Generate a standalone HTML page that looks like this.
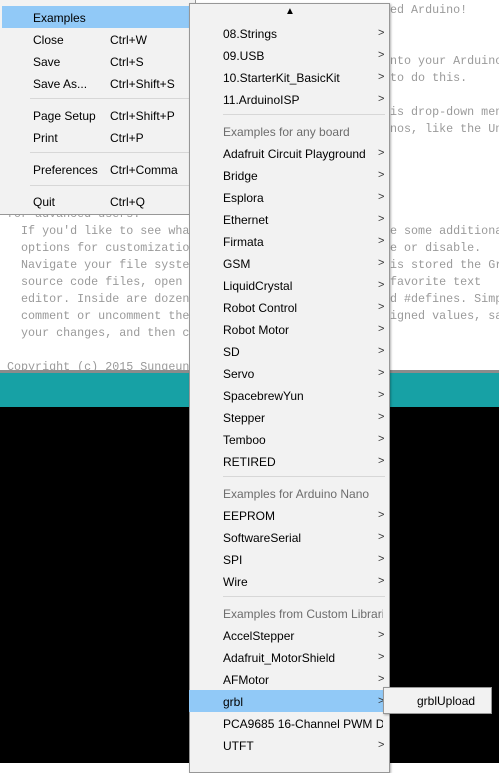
<!DOCTYPE html>
<html><head><style>
*{margin:0;padding:0;box-sizing:border-box}
body{width:499px;height:763px;overflow:hidden;position:relative;background:#fff;font-family:"Liberation Sans",sans-serif}
.mono{position:absolute;font-family:"Liberation Mono",monospace;font-size:11.7px;color:#9a9a9a;white-space:pre;line-height:17px}
.teal{position:absolute;left:0;top:373px;width:499px;height:34px;background:#17a1a5}
.gline{position:absolute;left:0;top:370px;width:499px;height:3px;background:#8c8c8c}
.black{position:absolute;left:0;top:407px;width:499px;height:356px;background:#000}
.menu{position:absolute;background:#f2f2f2;border:1px solid #979797;font-size:12px;color:#000}
.it{position:absolute;height:22px;line-height:22px;white-space:nowrap}
.sep{position:absolute;height:1px;background:#d7d7d7}
.hd{color:#6d6d6d}
.ar{position:absolute;font-size:11px;color:#333}
.hl{position:absolute;background:#91c9f7}
</style></head><body>
<div class="mono" style="left:390px;top:2px">ed Arduino!</div>
<div class="mono" style="left:390px;top:53px">nto your Arduino
to do this.</div>
<div class="mono" style="left:390px;top:104px">is drop-down menu
nos, like the Uno</div>
<div class="mono" style="left:390px;top:223px">e some additional
e or disable.
is stored the Grbl
favorite text
d #defines. Simpl
igned values, sav</div>
<div class="mono" style="left:7px;top:206px">for advanced users.
  If you'd like to see wha
  options for customizatio
  Navigate your file syste
  source code files, open
  editor. Inside are dozen
  comment or uncomment the
  your changes, and then c

Copyright (c) 2015 Sungeun</div>
<div class="gline"></div>
<div class="teal"></div>
<div class="black"></div>

<div class="menu" style="left:-1px;top:-1px;width:197px;height:216px">
 <div class="hl" style="left:2px;top:6px;width:194px;height:22px"></div>
 <div class="it" style="left:33px;top:7px">Examples</div>
 <div class="it" style="left:33px;top:29px">Close</div><div class="it" style="left:110px;top:29px">Ctrl+W</div>
 <div class="it" style="left:33px;top:51px">Save</div><div class="it" style="left:110px;top:51px">Ctrl+S</div>
 <div class="it" style="left:33px;top:73px">Save As...</div><div class="it" style="left:110px;top:73px">Ctrl+Shift+S</div>
 <div class="sep" style="left:30px;top:98px;width:160px"></div>
 <div class="it" style="left:33px;top:105px">Page Setup</div><div class="it" style="left:110px;top:105px">Ctrl+Shift+P</div>
 <div class="it" style="left:33px;top:127px">Print</div><div class="it" style="left:110px;top:127px">Ctrl+P</div>
 <div class="sep" style="left:30px;top:152px;width:160px"></div>
 <div class="it" style="left:33px;top:159px">Preferences</div><div class="it" style="left:110px;top:159px">Ctrl+Comma</div>
 <div class="sep" style="left:30px;top:185px;width:160px"></div>
 <div class="it" style="left:33px;top:191px">Quit</div><div class="it" style="left:110px;top:191px">Ctrl+Q</div>
</div>

<div class="menu" style="left:189px;top:3px;width:201px;height:770px;box-shadow:1px 1px 2px rgba(0,0,0,.3)">
 <div style="position:absolute;left:95px;top:2px;font-size:10px">▲</div>
 <div class="hl" style="left:-1px;top:686px;width:201px;height:22px"></div>
 <div id="items"></div>
</div>

<div class="menu" style="left:383px;top:687px;width:109px;height:27px;box-shadow:1px 1px 2px rgba(0,0,0,.3)">
 <div class="it" style="left:33px;top:2px">grblUpload</div>
</div>

<script>
var rows=[["08.Strings",1],["09.USB",1],["10.StarterKit_BasicKit",1],["11.ArduinoISP",1],["-"],["Examples for any board",0,1],["Adafruit Circuit Playground",1],["Bridge",1],["Esplora",1],["Ethernet",1],["Firmata",1],["GSM",1],["LiquidCrystal",1],["Robot Control",1],["Robot Motor",1],["SD",1],["Servo",1],["SpacebrewYun",1],["Stepper",1],["Temboo",1],["RETIRED",1],["-"],["Examples for Arduino Nano",0,1],["EEPROM",1],["SoftwareSerial",1],["SPI",1],["Wire",1],["-"],["Examples from Custom Libraries",0,1],["AccelStepper",1],["Adafruit_MotorShield",1],["AFMotor",1],["grbl",1],["PCA9685 16-Channel PWM Driver",0],["UTFT",1]];
var h="",y=19;
rows.forEach(function(r){
 if(r[0]=="-"){h+='<div class="sep" style="left:33px;top:'+(y+3)+'px;width:162px"></div>';y+=10;return;}
 h+='<div class="it'+(r[2]?' hd':'')+'" style="left:33px;top:'+y+'px;width:160px;overflow:hidden">'+r[0]+'</div>';
 if(r[1])h+='<div class="ar" style="left:188px;top:'+(y+4)+'px">&gt;</div>';
 y+=22;
});
document.getElementById("items").innerHTML=h;
</script>
</body></html>
